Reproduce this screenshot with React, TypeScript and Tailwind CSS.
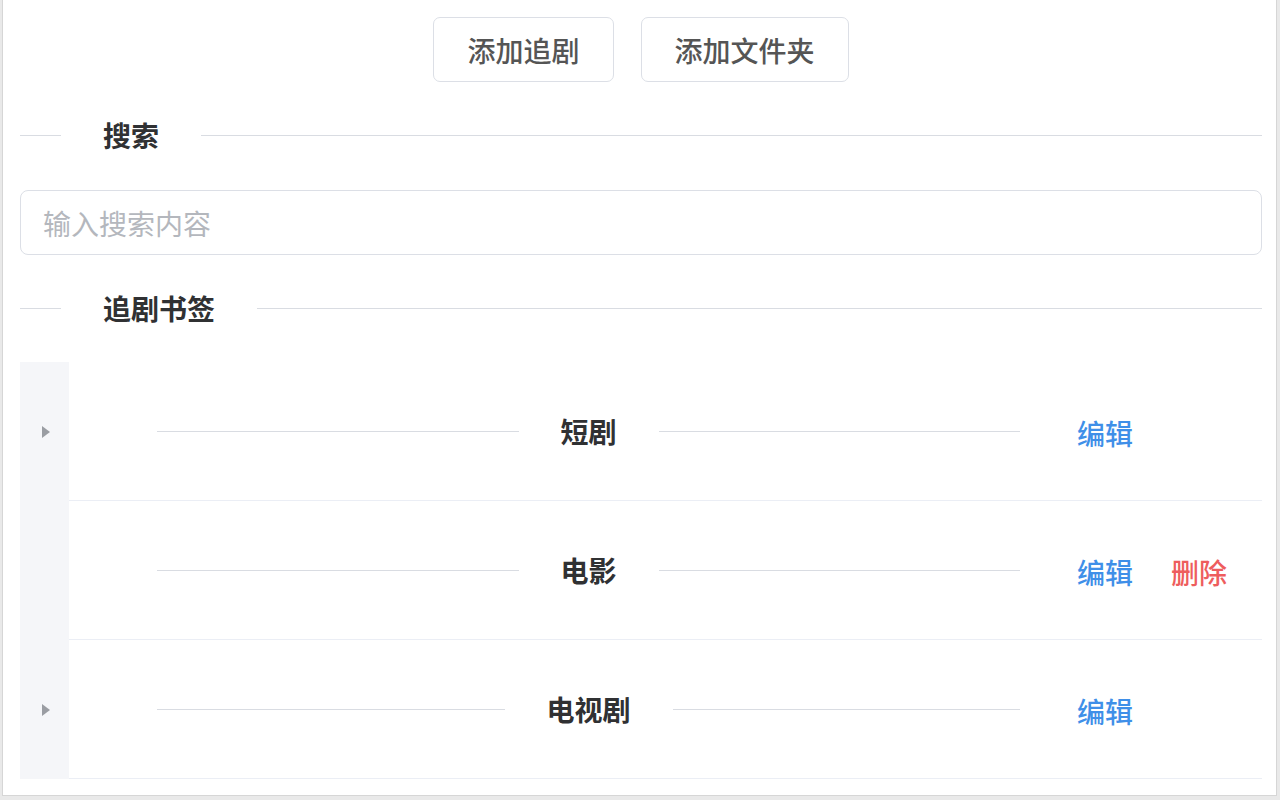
import React from "react";

const font = { fontFamily: '"Noto Sans CJK SC", "Noto Sans", sans-serif' };

function SectionDivider({ title }: { title: string }) {
  return (
    <div className="flex h-[40px] items-center">
      <div className="h-px w-[41px] bg-[#d9dce2]" />
      <div className="px-[42px] text-[28px] font-bold leading-none text-[#303133]">{title}</div>
      <div className="h-px flex-1 bg-[#d9dce2]" />
    </div>
  );
}

function Triangle() {
  return (
    <svg width="10" height="14" viewBox="0 0 10 14">
      <path d="M1 1 L9 7 L1 13 Z" fill="#9a9da3" />
    </svg>
  );
}

type Row = { name: string; arrow: boolean; del: boolean };

const rows: Row[] = [
  { name: "短剧", arrow: true, del: false },
  { name: "电影", arrow: false, del: true },
  { name: "电视剧", arrow: true, del: false },
];

export default function App() {
  return (
    <div className="h-[800px] w-[1280px] overflow-hidden bg-[#e9e9e9]" style={font}>
      <div className="ml-[2px] h-[796px] w-[1275px] border-l border-r border-b border-[#d6d6d6] bg-white pl-[17px] pr-[14px]">
        <div className="flex justify-center gap-[27px] pt-[17px]">
          <button className="h-[65px] rounded-[7px] border border-[#dcdfe6] bg-white px-[33px] text-[28px] font-medium text-[#555] leading-none">
            添加追剧
          </button>
          <button className="h-[65px] rounded-[7px] border border-[#dcdfe6] bg-white px-[33px] text-[28px] font-medium text-[#555] leading-none">
            添加文件夹
          </button>
        </div>

        <div className="mt-[33px]">
          <SectionDivider title="搜索" />
        </div>

        <div className="mt-[35px] flex h-[65px] items-center rounded-[8px] border border-[#dcdfe6] px-[22px]">
          <input
            className="w-full bg-transparent text-[28px] text-[#606266] outline-none placeholder:text-[#b4b7bd]"
            placeholder="输入搜索内容"
            style={font}
          />
        </div>

        <div className="mt-[33px]">
          <SectionDivider title="追剧书签" />
        </div>

        <div className="mt-[34px] flex flex-col">
          {rows.map((r) => (
            <div key={r.name} className="flex h-[139px]">
              <div className="flex w-[49px] items-center justify-center bg-[#f5f6f9] pl-[2px]">
                {r.arrow ? <Triangle /> : null}
              </div>
              <div className="flex flex-1 items-center border-b border-[#ebeef5] pl-[88px]">
                <div className="flex w-[863px] items-center">
                  <div className="h-px flex-1 bg-[#d9dce2]" />
                  <div className="px-[42px] text-[28px] font-bold leading-none text-[#303133]">{r.name}</div>
                  <div className="h-px flex-1 bg-[#d9dce2]" />
                </div>
                <div className="ml-[57px] flex gap-[38px] pt-[4px] text-[28px] font-medium leading-none">
                  <span className="text-[#3f8fe8]">编辑</span>
                  {r.del ? <span className="text-[#ee5d5d]">删除</span> : null}
                </div>
              </div>
            </div>
          ))}
        </div>
      </div>
    </div>
  );
}
